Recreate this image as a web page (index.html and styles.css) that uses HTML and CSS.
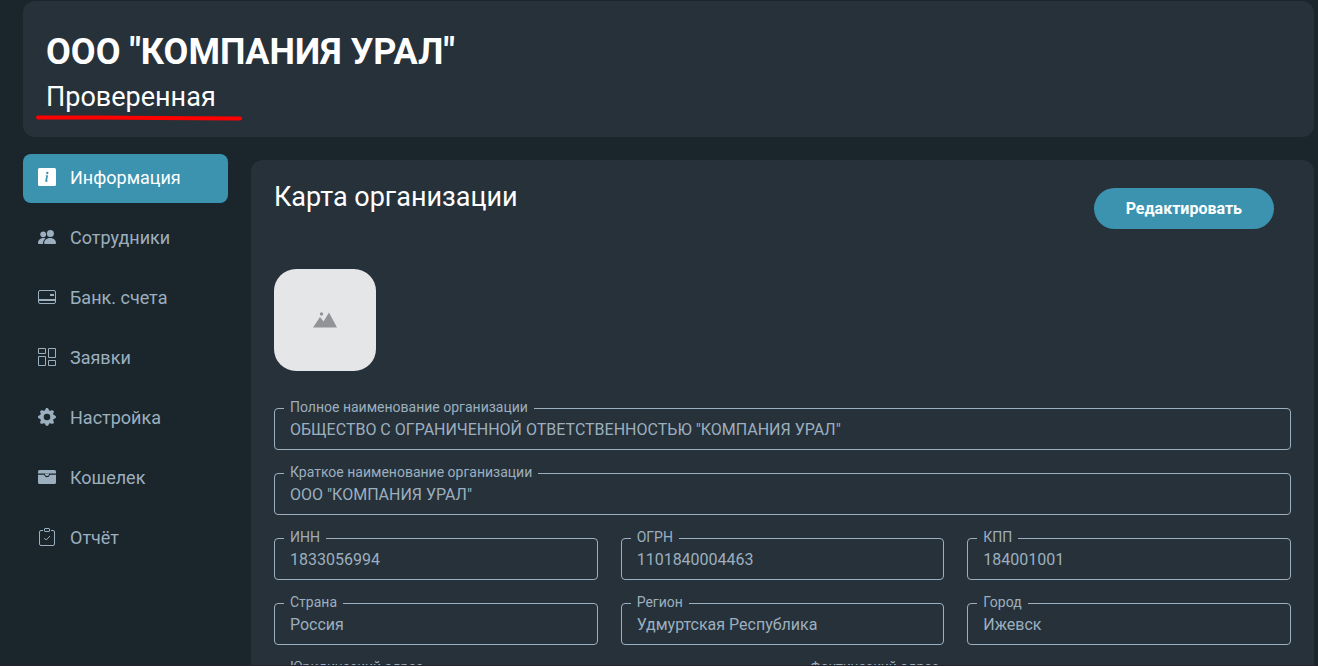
FILE: index.html
```html
<!DOCTYPE html>
<html lang="ru">
<head>
<meta charset="utf-8">
<meta name="viewport" content="width=device-width, initial-scale=1">
<title>ООО "КОМПАНИЯ УРАЛ"</title>
<link rel="stylesheet" href="styles.css">
</head>
<body>
<div class="page">
  <header class="company">
    <h1 class="company-name">ООО "КОМПАНИЯ УРАЛ"</h1>
    <p class="company-status">Проверенная
      <svg class="underline" viewBox="0 0 206 6" aria-hidden="true"><path d="M2 2.5 60 2.5 120 3 204 3.5"/></svg>
    </p>
  </header>
  <div class="columns">
    <nav class="menu">
      <a class="menu-item active" href="#info">
        <svg class="icon" viewBox="0 0 18 18"><path fill-rule="evenodd" d="M1.5 0h15A1.5 1.5 0 0 1 18 1.5v15a1.5 1.5 0 0 1-1.5 1.5h-15A1.5 1.5 0 0 1 0 16.5v-15A1.5 1.5 0 0 1 1.5 0zM10.100 7.200 7.500 7.500v.5c.6.1.7.3.6.7l-.8 3.500c-.2 1.100.1 1.700 1.100 1.700.6 0 1.300-.3 1.600-.8l.1-.5c-.7.4-1.100.2-1-.4zM9.300 6.200a1.200 1.200 0 1 0 0-2.400 1.200 1.200 0 0 0 0 2.400z"/></svg>
        <span>Информация</span></a>
      <a class="menu-item" href="#staff">
        <svg class="icon" viewBox="0 0 18 18"><circle cx="12.400" cy="5.500" r="3.500"/><circle cx="5.200" cy="6.300" r="2.900"/><path d="M6.900 16c-.5 0-.7-.4-.7-.9 0-2.600 2.300-5 6-5s5.800 2.400 5.800 5c0 .5-.3.900-.8.900zM0 15.100C0 12.300 2.400 10.100 5.400 10.100c.8 0 1.500.1 2.100.3C5.900 11.600 5 13.400 5 15.100c0 .3 0 .6.100.9H.8c-.5 0-.8-.4-.8-.9z"/></svg>
        <span>Сотрудники</span></a>
      <a class="menu-item" href="#accounts">
        <svg class="icon line" viewBox="0 0 18 18"><rect x=".5" y="2.500" width="17" height="13" rx="1.500"/><path d="M.5 11.500h17M.5 12.500h17"/><path class="solid" d="M12 6h4v2h-4z"/></svg>
        <span>Банк. счета</span></a>
      <a class="menu-item" href="#requests">
        <svg class="icon line" viewBox="0 0 18 18"><path d="M.5.5h7v5h-7zM10.500.5h7v9h-7zM.5 8.500h7v9h-7zM10.500 12.500h7v5h-7z"/></svg>
        <span>Заявки</span></a>
      <a class="menu-item" href="#settings">
        <svg class="icon" viewBox="0 0 16 16"><path d="M9.405 1.050c-.413-1.400-2.397-1.400-2.810 0l-.1.340a1.464 1.464 0 0 1-2.105.872l-.310-.170c-1.283-.698-2.686.705-1.987 1.987l.169.311c.446.820.023 1.841-.872 2.105l-.340.100c-1.400.413-1.400 2.397 0 2.810l.340.100a1.464 1.464 0 0 1 .872 2.105l-.170.310c-.698 1.283.705 2.686 1.987 1.987l.311-.169a1.464 1.464 0 0 1 2.105.872l.100.340c.413 1.400 2.397 1.400 2.810 0l.100-.340a1.464 1.464 0 0 1 2.105-.872l.310.170c1.283.698 2.686-.705 1.987-1.987l-.169-.311a1.464 1.464 0 0 1 .872-2.105l.340-.100c1.400-.413 1.400-2.397 0-2.810l-.340-.100a1.464 1.464 0 0 1-.872-2.105l.170-.310c.698-1.283-.705-2.686-1.987-1.987l-.311.169a1.464 1.464 0 0 1-2.105-.872zM8 10.930a2.929 2.929 0 1 1 0-5.860 2.929 2.929 0 0 1 0 5.858z"/></svg>
        <span>Настройка</span></a>
      <a class="menu-item" href="#wallet">
        <svg class="icon" viewBox="0 0 18 18"><path d="M1.500 2h15A1.500 1.500 0 0 1 18 3.500V5.500H0v-2A1.500 1.500 0 0 1 1.500 2zM0 6.800h5.700c.3 0 .5.200.7.500.4 1.200 1.200 2 2.600 2s2.200-.8 2.600-2c.2-.3.4-.5.700-.5H18v7.700a1.500 1.500 0 0 1-1.500 1.500h-15A1.500 1.500 0 0 1 0 14.500z"/><path d="M6.800 5.400h4.400c-.2 1.700-.9 2.500-2.200 2.500S7 7.100 6.800 5.400z"/></svg>
        <span>Кошелек</span></a>
      <a class="menu-item" href="#report">
        <svg class="icon line" viewBox="0 0 18 18"><path d="M5 2.500H3A1.500 1.500 0 0 0 1.500 4v12A1.500 1.500 0 0 0 3 17.500h12a1.500 1.500 0 0 0 1.500-1.500V4A1.500 1.500 0 0 0 15 2.500h-2"/><rect x="6.500" y=".5" width="5" height="3" rx=".5"/><path d="m6.200 10 2 2 3.700-3.900"/></svg>
        <span>Отчёт</span></a>
    </nav>
    <main class="card">
      <div class="card-head">
        <h2 class="card-title">Карта организации</h2>
        <button class="edit" type="button">Редактировать</button>
      </div>
      <div class="logo">
        <svg class="logo-icon" viewBox="0 0 24 16" role="img" aria-label="Логотип"><path d="M0 15.500 7 5l3.500 4.500L16 .5l8 15z"/><circle cx="8.500" cy="2" r="1.700"/></svg>
      </div>
      <form class="fields">
        <div class="field full"><input id="full" type="text" readonly value='ОБЩЕСТВО С ОГРАНИЧЕННОЙ ОТВЕТСТВЕННОСТЬЮ "КОМПАНИЯ УРАЛ"'><label for="full">Полное наименование организации</label></div>
        <div class="field full"><input id="short" type="text" readonly value='ООО "КОМПАНИЯ УРАЛ"'><label for="short">Краткое наименование организации</label></div>
        <div class="field third"><input id="inn" type="text" readonly value="1833056994"><label for="inn">ИНН</label></div>
        <div class="field third"><input id="ogrn" type="text" readonly value="1101840004463"><label for="ogrn">ОГРН</label></div>
        <div class="field third"><input id="kpp" type="text" readonly value="184001001"><label for="kpp">КПП</label></div>
        <div class="field third"><input id="country" type="text" readonly value="Россия"><label for="country">Страна</label></div>
        <div class="field third"><input id="region" type="text" readonly value="Удмуртская Республика"><label for="region">Регион</label></div>
        <div class="field third"><input id="city" type="text" readonly value="Ижевск"><label for="city">Город</label></div>
        <div class="field half"><input id="legal" type="text" readonly><label for="legal">Юридический адрес</label></div>
        <div class="field half"><input id="actual" type="text" readonly><label for="actual">Фактический адрес</label></div>
      </form>
    </main>
  </div>
</div>
</body>
</html>
```
FILE: styles.css
```css
:root {
  --bg: #1b262c;
  --panel: #27313a;
  --accent: #3c93b0;
  --muted: #9cafbf;
}

* {
  box-sizing: border-box;
}

body {
  margin: 0;
  background: var(--bg);
  color: #fff;
  font-family: Roboto, "Liberation Sans", sans-serif;
}

.page {
  height: 100vh;
  overflow: hidden;
  padding: 1px 4px 0 23px;
  border-bottom: 1px solid #29232f;
}

.company {
  padding: 28px 23px 23px;
  border-radius: 12px;
  background: var(--panel);
}

.company-name {
  margin: 0;
  font-size: 36px;
  font-weight: 700;
  line-height: 46px;
}

.company-status {
  position: relative;
  margin: 0;
  padding-top: 5px;
  font-size: 27px;
  line-height: 34px;
}

.underline {
  position: absolute;
  left: -10px;
  bottom: -7px;
  width: 206px;
  height: 6px;
  fill: none;
  stroke: #f00;
  stroke-width: 4;
  stroke-linecap: round;
}

.columns {
  display: grid;
  grid-template-columns: 205px 1fr;
  gap: 23px;
  align-items: start;
}

.menu {
  display: flex;
  flex-direction: column;
  gap: 11px;
  padding-top: 17px;
}

.menu-item {
  display: flex;
  align-items: center;
  gap: 14px;
  height: 49px;
  padding: 0 15px 2px;
  border-radius: 8px;
  color: var(--muted);
  font-size: 18px;
  line-height: 24px;
  text-decoration: none;
}

.menu-item.active {
  background: var(--accent);
  color: #fff;
}

.icon {
  flex: none;
  width: 18px;
  height: 18px;
  margin-bottom: 2px;
  fill: currentColor;
}

.icon.line {
  fill: none;
  stroke: currentColor;
}

.icon .solid {
  fill: currentColor;
  stroke: none;
}

.card {
  margin-top: 23px;
  padding: 20px 23px;
  border-radius: 12px;
  background: var(--panel);
}

.card-head {
  display: flex;
  justify-content: space-between;
  align-items: flex-start;
  padding-right: 17px;
}

.card-title {
  margin: 0;
  font-size: 27px;
  font-weight: 400;
  line-height: 34px;
}

.edit {
  margin-top: 8px;
  padding: 0 32px;
  height: 41px;
  border: 0;
  border-radius: 21px;
  background: var(--accent);
  color: #fff;
  font: 700 16px/24px Roboto, "Liberation Sans", sans-serif;
}

.logo {
  display: flex;
  align-items: center;
  justify-content: center;
  width: 102px;
  height: 102px;
  margin-top: 40px;
  border-radius: 22px;
  background: #e5e6e8;
}

.logo-icon {
  width: 24px;
  height: 16px;
  fill: #929396;
}

.fields {
  display: grid;
  grid-template-columns: repeat(6, 1fr);
  gap: 23px;
  margin-top: 37px;
}

.field {
  position: relative;
}

.full {
  grid-column: span 6;
}

.third {
  grid-column: span 2;
}

.half {
  grid-column: span 3;
}

.field input {
  display: block;
  width: 100%;
  height: 42px;
  padding: 0 15px;
  border: 1px solid var(--muted);
  border-radius: 4px;
  outline: 0;
  background: transparent;
  color: var(--muted);
  font: 16px/24px Roboto, "Liberation Sans", sans-serif;
}

.field label {
  position: absolute;
  top: -10px;
  left: 10px;
  padding: 0 6px;
  background: var(--panel);
  color: var(--muted);
  font-size: 14px;
  line-height: 18px;
}
```
